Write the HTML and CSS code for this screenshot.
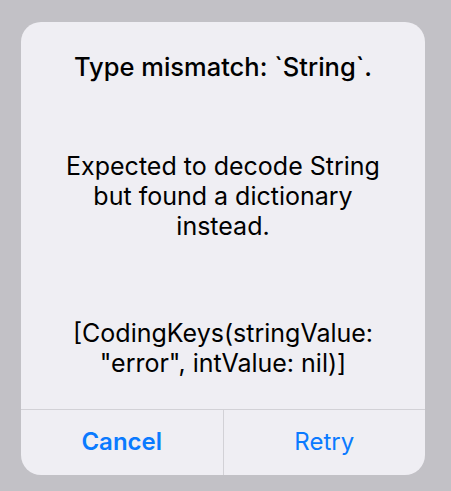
FILE: index.html
```html
<!DOCTYPE html>
<html lang="en">
<head>
  <meta charset="UTF-8" />
  <meta name="viewport" content="width=device-width, initial-scale=1.0" />
  <title>Alert</title>
  <link rel="stylesheet" href="styles.css">
</head>
<body>

  <div class="alert">
    <div class="alert-body">
      <h1 class="alert-title">Type mismatch: `String`.</h1>
      <p class="alert-message">Expected to decode String but found a dictionary instead.</p>
      <p class="alert-detail">[CodingKeys(stringValue: "error", intValue: nil)]</p>
    </div>
    <div class="alert-actions">
      <button class="alert-button cancel">Cancel</button>
      <button class="alert-button">Retry</button>
    </div>
  </div>

</body>
</html>
```

FILE: styles.css
```css
* { margin: 0; padding: 0; box-sizing: border-box; }
body { font-family: Inter, 'Noto Sans', sans-serif; background-color: #c2c1c6; color: #000; }
.alert { width: 404px; margin: 22px 0 0 21px; height: 453px; background: #efeef3; border-radius: 20px; display: flex; flex-direction: column; overflow: hidden; }
.alert-body { flex: 1; padding: 30px 36px 0; text-align: center; }
.alert-title { font-size: 25.5px; font-weight: 500; line-height: 30px; }
.alert-message { font-size: 25px; line-height: 30px; margin-top: 69px; }
.alert-detail { font-size: 25px; line-height: 30px; margin-top: 77px; }
.alert-actions { height: 66px; display: flex; border-top: 1px solid #d2d1d6; }
.alert-button { flex: 1; background: none; border: none; font-family: inherit; font-size: 24px; color: #0a7aff; padding-bottom: 2px; }
.alert-button + .alert-button { border-left: 1px solid #d2d1d6; }
.alert-button.cancel { font-weight: 600; }
```
